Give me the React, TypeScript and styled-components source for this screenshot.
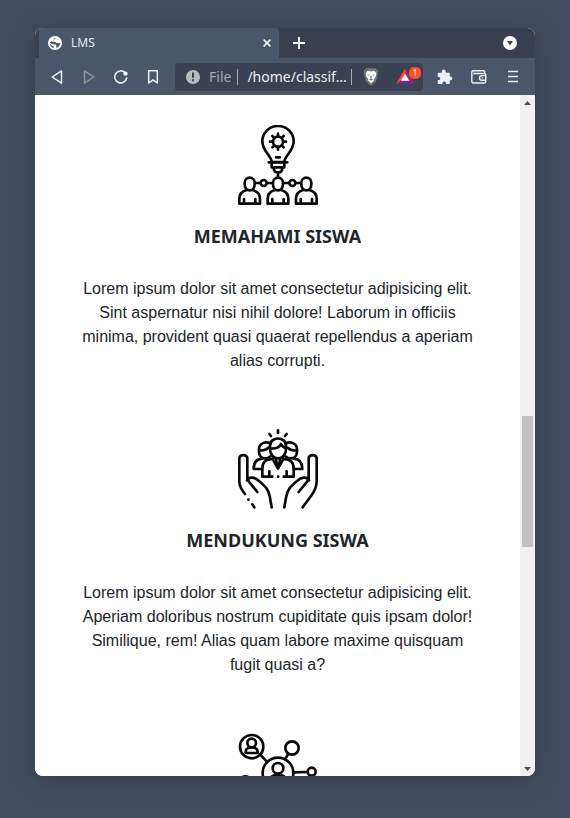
import React from "react";
import styled, { createGlobalStyle } from "styled-components";

const GlobalStyle = createGlobalStyle`
  *, *::before, *::after { box-sizing: border-box; }
  html, body { margin: 0; background: #434c5e; }
  button { appearance: none; border: 0; padding: 0; background: none; color: inherit; cursor: pointer; }
  svg { display: block; flex: none; }
`;

const Desktop = styled.div`
  display: flex;
  height: 100vh;
  padding: 28px 35px 42px;
  background: #434c5e;
`;

const BrowserWindow = styled.div`
  display: flex;
  flex: 1;
  flex-direction: column;
  min-width: 0;
  overflow: hidden;
  border-radius: 8px;
  background: #fff;
  box-shadow: 0 4px 24px rgba(20, 26, 40, 0.3);
  font-family: "Noto Sans", sans-serif;
`;

const TabStrip = styled.header`
  display: flex;
  flex: none;
  height: 30px;
  padding: 0 8px 0 4px;
  background: #393f4f;
  color: #fff;
`;

const Tab = styled.div`
  display: flex;
  align-items: center;
  width: 240px;
  padding: 0 2px 0 9px;
  gap: 9px;
  border-radius: 4px 4px 0 0;
  background: #4c566a;
`;

const TabTitle = styled.span`
  flex: 1;
  font-size: 12px;
  line-height: 16px;
  color: #e5e9f0;
`;

const IconButton = styled.button<{ $width: number; $dim?: boolean }>`
  display: flex;
  flex: none;
  align-items: center;
  justify-content: center;
  width: ${(p) => p.$width}px;
  height: 30px;
  opacity: ${(p) => (p.$dim ? 0.4 : 1)};
`;

const Spacer = styled.div`
  flex: 1;
`;

const Toolbar = styled.nav`
  display: flex;
  flex: none;
  align-items: center;
  height: 37px;
  padding: 0 5px 0 6px;
  background: #4c566a;
  color: #eceff4;
`;

const AddressBar = styled.div`
  display: flex;
  flex: 1;
  align-items: center;
  min-width: 0;
  height: 28px;
  margin: 0 5px 0 6px;
  padding: 0 1px 0 10px;
  border-radius: 4px;
  background: #3b4150;
  font-size: 13px;
  line-height: 18px;
`;

const Scheme = styled.span`
  margin-left: 8px;
  font-size: 14px;
  color: #a3a7b0;
`;

const Divider = styled.span`
  flex: none;
  width: 1px;
  height: 16px;
  margin: 0 2px 0 6px;
  background: #a3a7b0;
`;

const Address = styled.input`
  flex: 1;
  min-width: 0;
  margin: 0 -4px 0 7px;
  padding: 0;
  border: 0;
  outline: 0;
  background: none;
  color: #eceff4;
  font: inherit;
  font-size: 14px;
`;

const Viewport = styled.div`
  display: flex;
  flex: 1;
  min-height: 0;
`;

const Content = styled.main`
  flex: 1;
  min-width: 0;
  overflow: hidden;
  padding-top: 30px;
  background: #fff;
  color: #212529;
`;

const Feature = styled.section`
  display: flex;
  flex-direction: column;
  align-items: center;
  padding: 0 45px 56px;
  text-align: center;
`;

const FeatureTitle = styled.h2`
  margin: 19px 0 29px;
  font: 700 18px/24px "Noto Sans", sans-serif;
`;

const FeatureText = styled.p`
  margin: 0;
  max-width: 400px;
  font: 16px/24px "Liberation Sans", Arial, sans-serif;
`;

const ScrollBar = styled.div`
  display: flex;
  flex: none;
  flex-direction: column;
  align-items: center;
  width: 15px;
  background: #f1f1f1;
  color: #505050;
`;

const ScrollArrow = styled.button`
  display: flex;
  flex: none;
  align-items: center;
  justify-content: center;
  width: 15px;
  height: 15px;
`;

const Track = styled.div`
  display: grid;
  flex: 1;
  grid-template-rows: 306fr 131fr 214fr;
  width: 11px;
`;

const Thumb = styled.div`
  grid-row: 2;
  background: #c1c1c1;
`;

const Globe = () => (
  <svg width="14" height="14" viewBox="0 0 14 14" aria-hidden="true">
    <circle cx="7" cy="7" r="7" fill="#fff" />
    <path d="M8.3 1.700C6.500 1.500 6 2.400 6.300 3.200c.3.900-.4 1-1.500 1.200-.9.200-.8 1.200.2 1.300l2 .1c.9 0 1.100.9 1.800 1.200.9.300 2.200.1 3.500-.4.2 2.600-1.500 4.800-4 5.500.2-.9-.2-1.300.2-2-.1-1.300-1-1.700-2.300-1.700C4.600 8.400 3 7.800 1.700 6.500c-.2 2.900 1.600 5 4.100 5.700C5.500 11 6 10.700 5 10 3.300 9.300 2.200 8.600 1.700 6.500" fill="#4c566a" />
  </svg>
);

const Cross = () => (
  <svg width="8" height="8" viewBox="0 0 8 8" fill="none" stroke="#fff" strokeWidth="1.5" aria-hidden="true">
    <path d="M.6.6l6.8 6.8M7.4.6L.6 7.4" />
  </svg>
);

const Plus = () => (
  <svg width="12" height="12" viewBox="0 0 12 12" fill="none" stroke="#fff" strokeWidth="1.8" aria-hidden="true">
    <path d="M6 0v12M0 6h12" />
  </svg>
);

const ChevronDisc = () => (
  <svg width="14" height="14" viewBox="0 0 14 14" aria-hidden="true">
    <circle cx="7" cy="7" r="7" fill="#fff" />
    <path d="M4 5h6L7 9.5z" fill="#393f4f" />
  </svg>
);

const Triangle = ({ flip }: { flip?: boolean }) => (
  <svg width="14" height="14" viewBox="0 0 14 14" fill="none" stroke="currentColor" strokeWidth="1.5" strokeLinejoin="round" aria-hidden="true">
    <path d={flip ? "M2.500.8v12.400L11.800 7z" : "M11.500.8v12.400L2.200 7z"} />
  </svg>
);

const Reload = () => (
  <svg width="14" height="14" viewBox="0 0 14 14" fill="none" stroke="currentColor" strokeWidth="1.6" strokeLinecap="round" aria-hidden="true">
    <path d="M12.700 8A6 6 0 1 1 11 2.600" />
    <circle cx="11.500" cy="3.600" r="2.200" fill="currentColor" stroke="none" />
  </svg>
);

const Bookmark = () => (
  <svg width="14" height="14" viewBox="0 0 14 14" fill="none" stroke="currentColor" strokeWidth="1.5" strokeLinejoin="round" aria-hidden="true">
    <path d="M2.700.8h8.600v12.200L7 9.800l-4.300 3.200z" />
  </svg>
);

const Notice = () => (
  <svg width="16" height="16" viewBox="0 0 16 16" aria-hidden="true">
    <circle cx="8" cy="8" r="7" fill="#b9bbc0" />
    <path d="M8 3.500v5.200M8 10.300v2" stroke="#3b4150" strokeWidth="2" />
  </svg>
);

const Lion = () => (
  <svg width="16" height="18" viewBox="0 0 16 18" aria-hidden="true">
    <path d="M3.500.3h9l3 2.700-.6 1 .3 1-2.200 8.500L8 17.700l-5-4.200L.8 5l.3-1-.6-1z" fill="#77777a" />
    <path d="M4.500 3l3.500.5L11.500 3l1.900 2.500-.6 3-2 2.500.2 1.500-3 2.500-3-2.500.2-1.500-2-2.500-.6-3z" fill="#fff" />
    <path d="M4.300 6.300l2.600.6-1 .9zM11.700 6.300l-2.600.6 1 .9zM6 11.200l2-.8 2 .8-2 1.400zM7.500 7.800h1l.5 2H7z" fill="#66666a" />
  </svg>
);

const Rewards = () => (
  <svg width="34" height="20" viewBox="0 0 34 20" aria-hidden="true">
    <path d="M17 1.500L8 17l5-3L17 7z" fill="#ff4724" />
    <path d="M17 1.500L26 17l-5-3L17 7z" fill="#b5286a" />
    <path d="M8 17h18l-5-3.500h-8z" fill="#662d91" />
    <path d="M17 6.500L12.800 13.800h8.400z" fill="#fff" />
    <rect x="21" y="0" width="12" height="12" rx="5" fill="#fb542b" />
    <text x="27" y="9" textAnchor="middle" fontFamily="Noto Sans, sans-serif" fontSize="8" fill="#fff">1</text>
  </svg>
);

const Puzzle = () => (
  <svg width="16" height="16" viewBox="0 0 16 16" fill="currentColor" aria-hidden="true">
    <path d="M1.500 3.800h3.400c-.8-4.300 4.600-4.300 3.900 0H12a.8.800 0 0 1 .8.800v3c3.300-.4 3.300 4 0 3.600V14.200a.8.800 0 0 1-.8.800H9c.5-3.200-4-3.200-3.600 0H1.500a.8.800 0 0 1-.8-.8v-3c3.300.5 3.300-3.800 0-3.400V4.600a.8.800 0 0 1 .8-.8z" />
  </svg>
);

const Wallet = () => (
  <svg width="16" height="14" viewBox="0 0 16 14" fill="none" stroke="currentColor" strokeWidth="1.4" strokeLinejoin="round" aria-hidden="true">
    <path d="M13.700 3.500V1.800a1 1 0 0 0-1-1H2A1.300 1.300 0 0 0 .8 2v9.500a1.500 1.500 0 0 0 1.500 1.500h10.900a1.500 1.500 0 0 0 1.500-1.500V4.700a1.300 1.300 0 0 0-1.300-1.200H2.200M15 5.600h-4.200a2.300 2.300 0 0 0 0 4.600H15" />
    <path d="M10.800 7.900h1.200" />
  </svg>
);

const Menu = () => (
  <svg width="10" height="13" viewBox="0 0 10 13" fill="none" stroke="currentColor" strokeWidth="1.5" aria-hidden="true">
    <path d="M0 1.500h10M0 6.500h10M0 11.500h10" />
  </svg>
);

const ArrowHead = ({ down }: { down?: boolean }) => (
  <svg width="7" height="4" viewBox="0 0 7 4" fill="currentColor" aria-hidden="true">
    <path d={down ? "M0 0h7L3.500 4z" : "M0 4h7L3.500 0z"} />
  </svg>
);

const lineArt = {
  width: 80,
  height: 80,
  fill: "none",
  stroke: "#0a0a0a",
  strokeWidth: 8,
  strokeLinecap: "round" as const,
  strokeLinejoin: "round" as const,
  "aria-hidden": true,
};

const IdeaArt = () => (
  <svg {...lineArt} viewBox="30 30 240 240">
    <path d="M131 141c0-19-28-31-28-62a47 46 0 0 1 94 0c0 31-28 43-28 62z" />
    <path d="M122 142h56M131 143v14h38v-14M137 158c0 10 5 14 13 14s13-4 13-14M144 127h12M150 173v15" />
    <circle cx="150" cy="80" r="15" />
    <path d="M150 56v8M150 96v8M126 80h8M166 80h8M133 63l6 6M161 91l6 6M133 97l6-6M161 69l6-6" />
    <circle cx="107" cy="204" r="9" />
    <circle cx="193" cy="204" r="9" />
    <path d="M82 204h15M117 204h15M168 204h15M203 204h15" />
    {[65, 150, 235].map((x) => (
      <g key={x} transform={`translate(${x} 0)`}>
        <path d="M-15 203a15 15 0 0 1 30 0v5c0 10-6 18-15 18s-15-8-15-18z" />
        <path d="M-11 226c-13 4-20 12-20 25v15h62v-15c0-13-7-21-20-25M-17 252v13M17 252v13" />
      </g>
    ))}
  </svg>
);

const SupportArt = () => (
  <svg {...lineArt} viewBox="30 27 240 240">
    <path d="M150 31v8M124 42l5 6M176 42l-5 6" />
    <path d="M126 78c0-30 48-30 48 0v10c0 14-10 27-24 27s-24-13-24-27zM126 85c18 2 29-4 33-13 3 7 8 11 15 12" />
    <path d="M128 71c-14-8-35-2-35 17v7c0 12 8 20 19 20 6 0 11-2 15-6M172 71c14-8 35-2 35 17v7c0 12-8 20-19 20-6 0-11-2-15-6M94 91c12 2 21-2 27-8M206 91c-12 2-21-2-27-8" />
    <path d="M103 116c-20 1-26 14-26 31h25M197 116c20 1 26 14 26 31h-25" />
    <path d="M135 116c-25 3-32 12-32 30v24h30M165 116c25 3 32 12 32 30v24h-30M124 154v15M176 154v15M135 119l15 27 15-27M144 120l6 24 6-24M150 170h.5" />
    <path d="M51 222c-12-14-17-24-17-38v-69c0-13 24-13 24 0v64l30 37M57 181c8-14 25-8 36 2 20 17 28 25 32 45l6 34M61 239h.5M73 253l6 9" />
    <path d="M224 262l25-34c12-16 17-27 17-44v-69c0-13-24-13-24 0v64l-30 37M243 181c-8-14-25-8-36 2-20 17-28 25-32 45l-6 34" />
  </svg>
);

const NetworkArt = () => (
  <svg {...lineArt} viewBox="30 24 240 240">
    <circle cx="71" cy="65" r="35" />
    <circle cx="71" cy="54" r="13" />
    <path d="M53 84v-4c0-17 36-17 36 0v4zM96 89l21 21M180 88l-9 15M196 142l42-1" />
    <circle cx="192" cy="69" r="20" />
    <circle cx="251" cy="140" r="12" />
    <circle cx="150" cy="144" r="46" />
    <circle cx="150" cy="130" r="16" />
    <path d="M124 170c0-28 52-28 52 0v8h-52z" />
    <circle cx="52" cy="172" r="18" />
  </svg>
);

const features = [
  {
    title: "MEMAHAMI SISWA",
    text: "Lorem ipsum dolor sit amet consectetur adipisicing elit. Sint aspernatur nisi nihil dolore! Laborum in officiis minima, provident quasi quaerat repellendus a aperiam alias corrupti.",
    Art: IdeaArt,
  },
  {
    title: "MENDUKUNG SISWA",
    text: "Lorem ipsum dolor sit amet consectetur adipisicing elit. Aperiam doloribus nostrum cupiditate quis ipsam dolor! Similique, rem! Alias quam labore maxime quisquam fugit quasi a?",
    Art: SupportArt,
  },
];

export default function App() {
  return (
    <>
      <GlobalStyle />
      <Desktop>
        <BrowserWindow>
          <TabStrip>
            <Tab>
              <Globe />
              <TabTitle>LMS</TabTitle>
              <IconButton $width={20} aria-label="Close tab"><Cross /></IconButton>
            </Tab>
            <IconButton $width={40} aria-label="New tab"><Plus /></IconButton>
            <Spacer />
            <IconButton $width={34} aria-label="Search tabs"><ChevronDisc /></IconButton>
          </TabStrip>
          <Toolbar>
            <IconButton $width={32} aria-label="Back"><Triangle /></IconButton>
            <IconButton $width={32} $dim aria-label="Forward"><Triangle flip /></IconButton>
            <IconButton $width={32} aria-label="Reload"><Reload /></IconButton>
            <IconButton $width={32} aria-label="Bookmark"><Bookmark /></IconButton>
            <AddressBar>
              <Notice />
              <Scheme>File</Scheme>
              <Divider />
              <Address aria-label="Address" readOnly value="/home/classif…" />
              <Divider />
              <IconButton $width={34} aria-label="Shields"><Lion /></IconButton>
              <IconButton $width={34} aria-label="Rewards"><Rewards /></IconButton>
            </AddressBar>
            <IconButton $width={34} aria-label="Extensions"><Puzzle /></IconButton>
            <IconButton $width={34} aria-label="Wallet"><Wallet /></IconButton>
            <IconButton $width={34} aria-label="Menu"><Menu /></IconButton>
          </Toolbar>
          <Viewport>
            <Content>
              {features.map(({ title, text, Art }) => (
                <Feature key={title}>
                  <Art />
                  <FeatureTitle>{title}</FeatureTitle>
                  <FeatureText>{text}</FeatureText>
                </Feature>
              ))}
              <Feature>
                <NetworkArt />
              </Feature>
            </Content>
            <ScrollBar>
              <ScrollArrow aria-label="Scroll up"><ArrowHead /></ScrollArrow>
              <Track><Thumb /></Track>
              <ScrollArrow aria-label="Scroll down"><ArrowHead down /></ScrollArrow>
            </ScrollBar>
          </Viewport>
        </BrowserWindow>
      </Desktop>
    </>
  );
}
